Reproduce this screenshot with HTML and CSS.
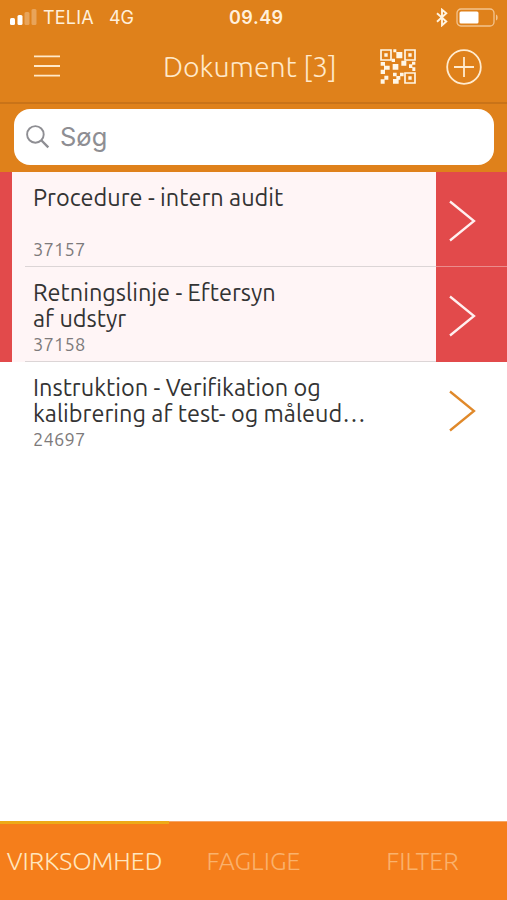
FILE: index.html
```html
<!DOCTYPE html>
<html lang="da">
<head>
    <meta charset="UTF-8">
    <meta name="viewport" content="width=device-width, initial-scale=1.0">
    <title>Dokument</title>
    <link rel="stylesheet" href="styles.css">
</head>
<body>

<div class="app">
    <div class="status-bar">
        <div class="carrier">
            <svg class="signal" width="28" height="17" viewBox="0 0 28 17">
                <rect x="0" y="10" width="5" height="7" rx="1.5" fill="#fff"/>
                <rect x="7.5" y="7" width="5" height="10" rx="1.5" fill="#fff"/>
                <rect x="14.5" y="4" width="5" height="13" rx="1.5" fill="#fff" opacity=".28"/>
                <rect x="21.5" y="1" width="5" height="16" rx="1.5" fill="#fff" opacity=".28"/>
            </svg>
            <span class="carrier-name">TELIA</span>
            <span class="network">4G</span>
        </div>
        <div class="time">09.49</div>
        <div class="indicators">
            <svg width="12" height="19" viewBox="0 0 12 19" fill="none" stroke="#fff3e0" stroke-width="1.9">
                <path d="M1 5.3 10.3 13.5 6 17.3V1.7L10.3 5.3 1 13.7"/>
            </svg>
            <svg width="43" height="19" viewBox="0 0 43 19">
                <rect x="1" y="1" width="37" height="17" rx="4" fill="none" stroke="#f3c48f" stroke-width="1.3"/>
                <rect x="3.5" y="3.5" width="19" height="12" rx="1.5" fill="#fff"/>
                <path d="M40 6.5c2.2.6 2.2 5.4 0 6z" fill="#f3c48f"/>
            </svg>
        </div>
    </div>

    <div class="nav-bar">
        <button type="button" class="menu-btn" aria-label="Menu">
            <svg width="26" height="24" viewBox="0 0 26 24" stroke="#ffe9c9" stroke-width="1.8">
                <path d="M0 2.4h26M0 12h26M0 21.6h26"/>
            </svg>
        </button>
        <h1 class="title">Dokument [3]</h1>
        <button type="button" class="qr-btn" aria-label="Scan">
            <svg width="36" height="35" viewBox="0 0 108 105">
                <g fill="none" stroke="#fff6e6" stroke-width="5">
                    <path d="M3 3h30v30H3zM75 3h30v30H75zM75 72h30v30H75z"/>
                </g>
                <g fill="#fff6e6">
                    <path d="M13 13h10v10H13zM85 13h10v10H85zM85 82h10v10H85z"/>
                    <path d="M40 1h9v9h-9zM49 9h18v19H49zM35 29h10v10H35zM64 35h15v15H64zM38 45h17v17H38z"/>
                    <path d="M2 39h13v11h14v12H15v13H2V62h10V50H2z"/>
                    <path d="M87 46h9v-8h10v9h-9v8h9v11h-9v-9H87z"/>
                    <path d="M2 91h11V80h12v12H14v12H2zM39 71h11v10h10V71h11v11H61v10h-5v12H39V90h10v-8H39z"/>
                </g>
            </svg>
        </button>
        <button type="button" class="add-btn" aria-label="Tilføj">
            <svg width="36" height="36" viewBox="0 0 36 36" fill="none" stroke="#ffebcf" stroke-width="1.8">
                <circle cx="18" cy="18" r="16.8"/>
                <path d="M18 8v20M8 18h20"/>
            </svg>
        </button>
    </div>

    <div class="search-bar">
        <div class="search-box">
            <svg width="24" height="24" viewBox="0 0 24 24" fill="none" stroke="#8e8e93" stroke-width="1.9">
                <circle cx="9.4" cy="9.4" r="8.3"/>
                <path d="M15.5 15.5 22.3 22.3" stroke-width="2.4"/>
            </svg>
            <span class="placeholder">Søg</span>
        </div>
    </div>

    <div class="list">
        <div class="row urgent">
            <div class="info">
                <div class="name">Procedure - intern audit</div>
                <div class="number">37157</div>
            </div>
            <div class="arrow">
                <svg width="28" height="42" viewBox="0 0 28 42"><path d="M1 1.5 25 21 1 40.5"/></svg>
            </div>
        </div>
        <div class="row urgent">
            <div class="info">
                <div class="name">Retningslinje - Eftersyn<br>af udstyr</div>
                <div class="number">37158</div>
            </div>
            <div class="arrow">
                <svg width="28" height="42" viewBox="0 0 28 42"><path d="M1 1.5 25 21 1 40.5"/></svg>
            </div>
        </div>
        <div class="row">
            <div class="info">
                <div class="name">Instruktion - Verifikation og<br>kalibrering af test- og måleud…</div>
                <div class="number">24697</div>
            </div>
            <div class="arrow">
                <svg width="28" height="42" viewBox="0 0 28 42"><path d="M1 1.5 25 21 1 40.5"/></svg>
            </div>
        </div>
    </div>

    <div class="tabs">
        <div class="tab active">VIRKSOMHED</div>
        <div class="tab">FAGLIGE</div>
        <div class="tab">FILTER</div>
    </div>
</div>

</body>
</html>
```

FILE: styles.css
```css
* {
    box-sizing: border-box;
}

body {
    margin: 0;
    font-family: Ubuntu, "Noto Sans", sans-serif;
    background-color: #fff;
}

button {
    padding: 0;
    border: none;
    background: none;
}

svg {
    display: block;
}

.app {
    display: flex;
    flex-direction: column;
    height: 900px;
    width: 507px;
    overflow: hidden;
}

.status-bar {
    display: grid;
    grid-template-columns: 219px auto 1fr;
    align-items: center;
    height: 34px;
    padding: 0 8px 0 10px;
    background-color: #df811b;
    color: #fff0db;
    font-family: Inter, sans-serif;
    font-size: 18px;
}

.carrier {
    display: flex;
    align-items: center;
}

.signal {
    margin-top: -2px;
}

.carrier-name {
    margin-left: 5px;
    letter-spacing: 0.2px;
}

.network {
    margin-left: 15px;
}

.time {
    font-weight: 600;
    letter-spacing: 0.5px;
}

.indicators {
    display: flex;
    justify-content: flex-end;
    gap: 8px;
}

.nav-bar {
    display: flex;
    align-items: center;
    height: 70px;
    padding: 0 25px 4px 34px;
    background-color: #df811b;
    border-bottom: 2px solid #c97318;
}

.title {
    flex: 1;
    margin: 0 0 0 103px;
    color: #ffe9ca;
    font-size: 28.5px;
    font-weight: 300;
    line-height: 40px;
    white-space: nowrap;
}

.add-btn {
    margin-top: 1px;
    margin-left: 30px;
}

.search-bar {
    height: 68px;
    padding: 5px 13px 7px 14px;
    background-color: #df811b;
}

.search-box {
    display: flex;
    align-items: center;
    gap: 10px;
    height: 56px;
    padding-left: 12px;
    border-radius: 16px;
    background-color: #fff;
}

.placeholder {
    margin-top: -2px;
    color: #8e8e93;
    font-family: Inter, sans-serif;
    font-size: 25.5px;
}

.list {
    flex: 1;
}

.row {
    display: flex;
    height: 95px;
    border-left: 12px solid transparent;
}

.info {
    flex: 1;
    margin-left: 13px;
    padding: 12px 0 0 8px;
}

.name {
    height: 53px;
    color: #333;
    font-size: 23.5px;
    line-height: 26px;
    white-space: nowrap;
}

.number {
    color: #7d7a7b;
    font-size: 18.3px;
    line-height: 24px;
    letter-spacing: 0.2px;
}

.arrow {
    width: 71px;
    padding: 28px 0 0 13px;
}

.arrow path {
    fill: none;
    stroke: #e0892a;
    stroke-width: 2.3;
}

.urgent {
    border-left-color: #e24a4b;
    background-color: #fff5f6;
}

.urgent .info {
    border-bottom: 1px solid #dcd5d6;
}

.urgent .arrow {
    background-color: #e24a4b;
}

.urgent:first-child .arrow {
    border-bottom: 1px solid #eb8c8c;
}

.urgent .arrow path {
    stroke: #fff0f0;
}

.tabs {
    display: grid;
    grid-template-columns: repeat(3, 1fr);
    height: 79px;
    background-color: #f57e1b;
}

.tab {
    padding-top: 23px;
    border-top: 1px solid #f6a565;
    color: #fab16c;
    font-size: 25.2px;
    font-weight: 300;
    line-height: 32px;
    text-align: center;
}

.tab.active {
    padding-top: 21px;
    border-top: 3px solid #edaa18;
    color: #ffe6bf;
}
```
